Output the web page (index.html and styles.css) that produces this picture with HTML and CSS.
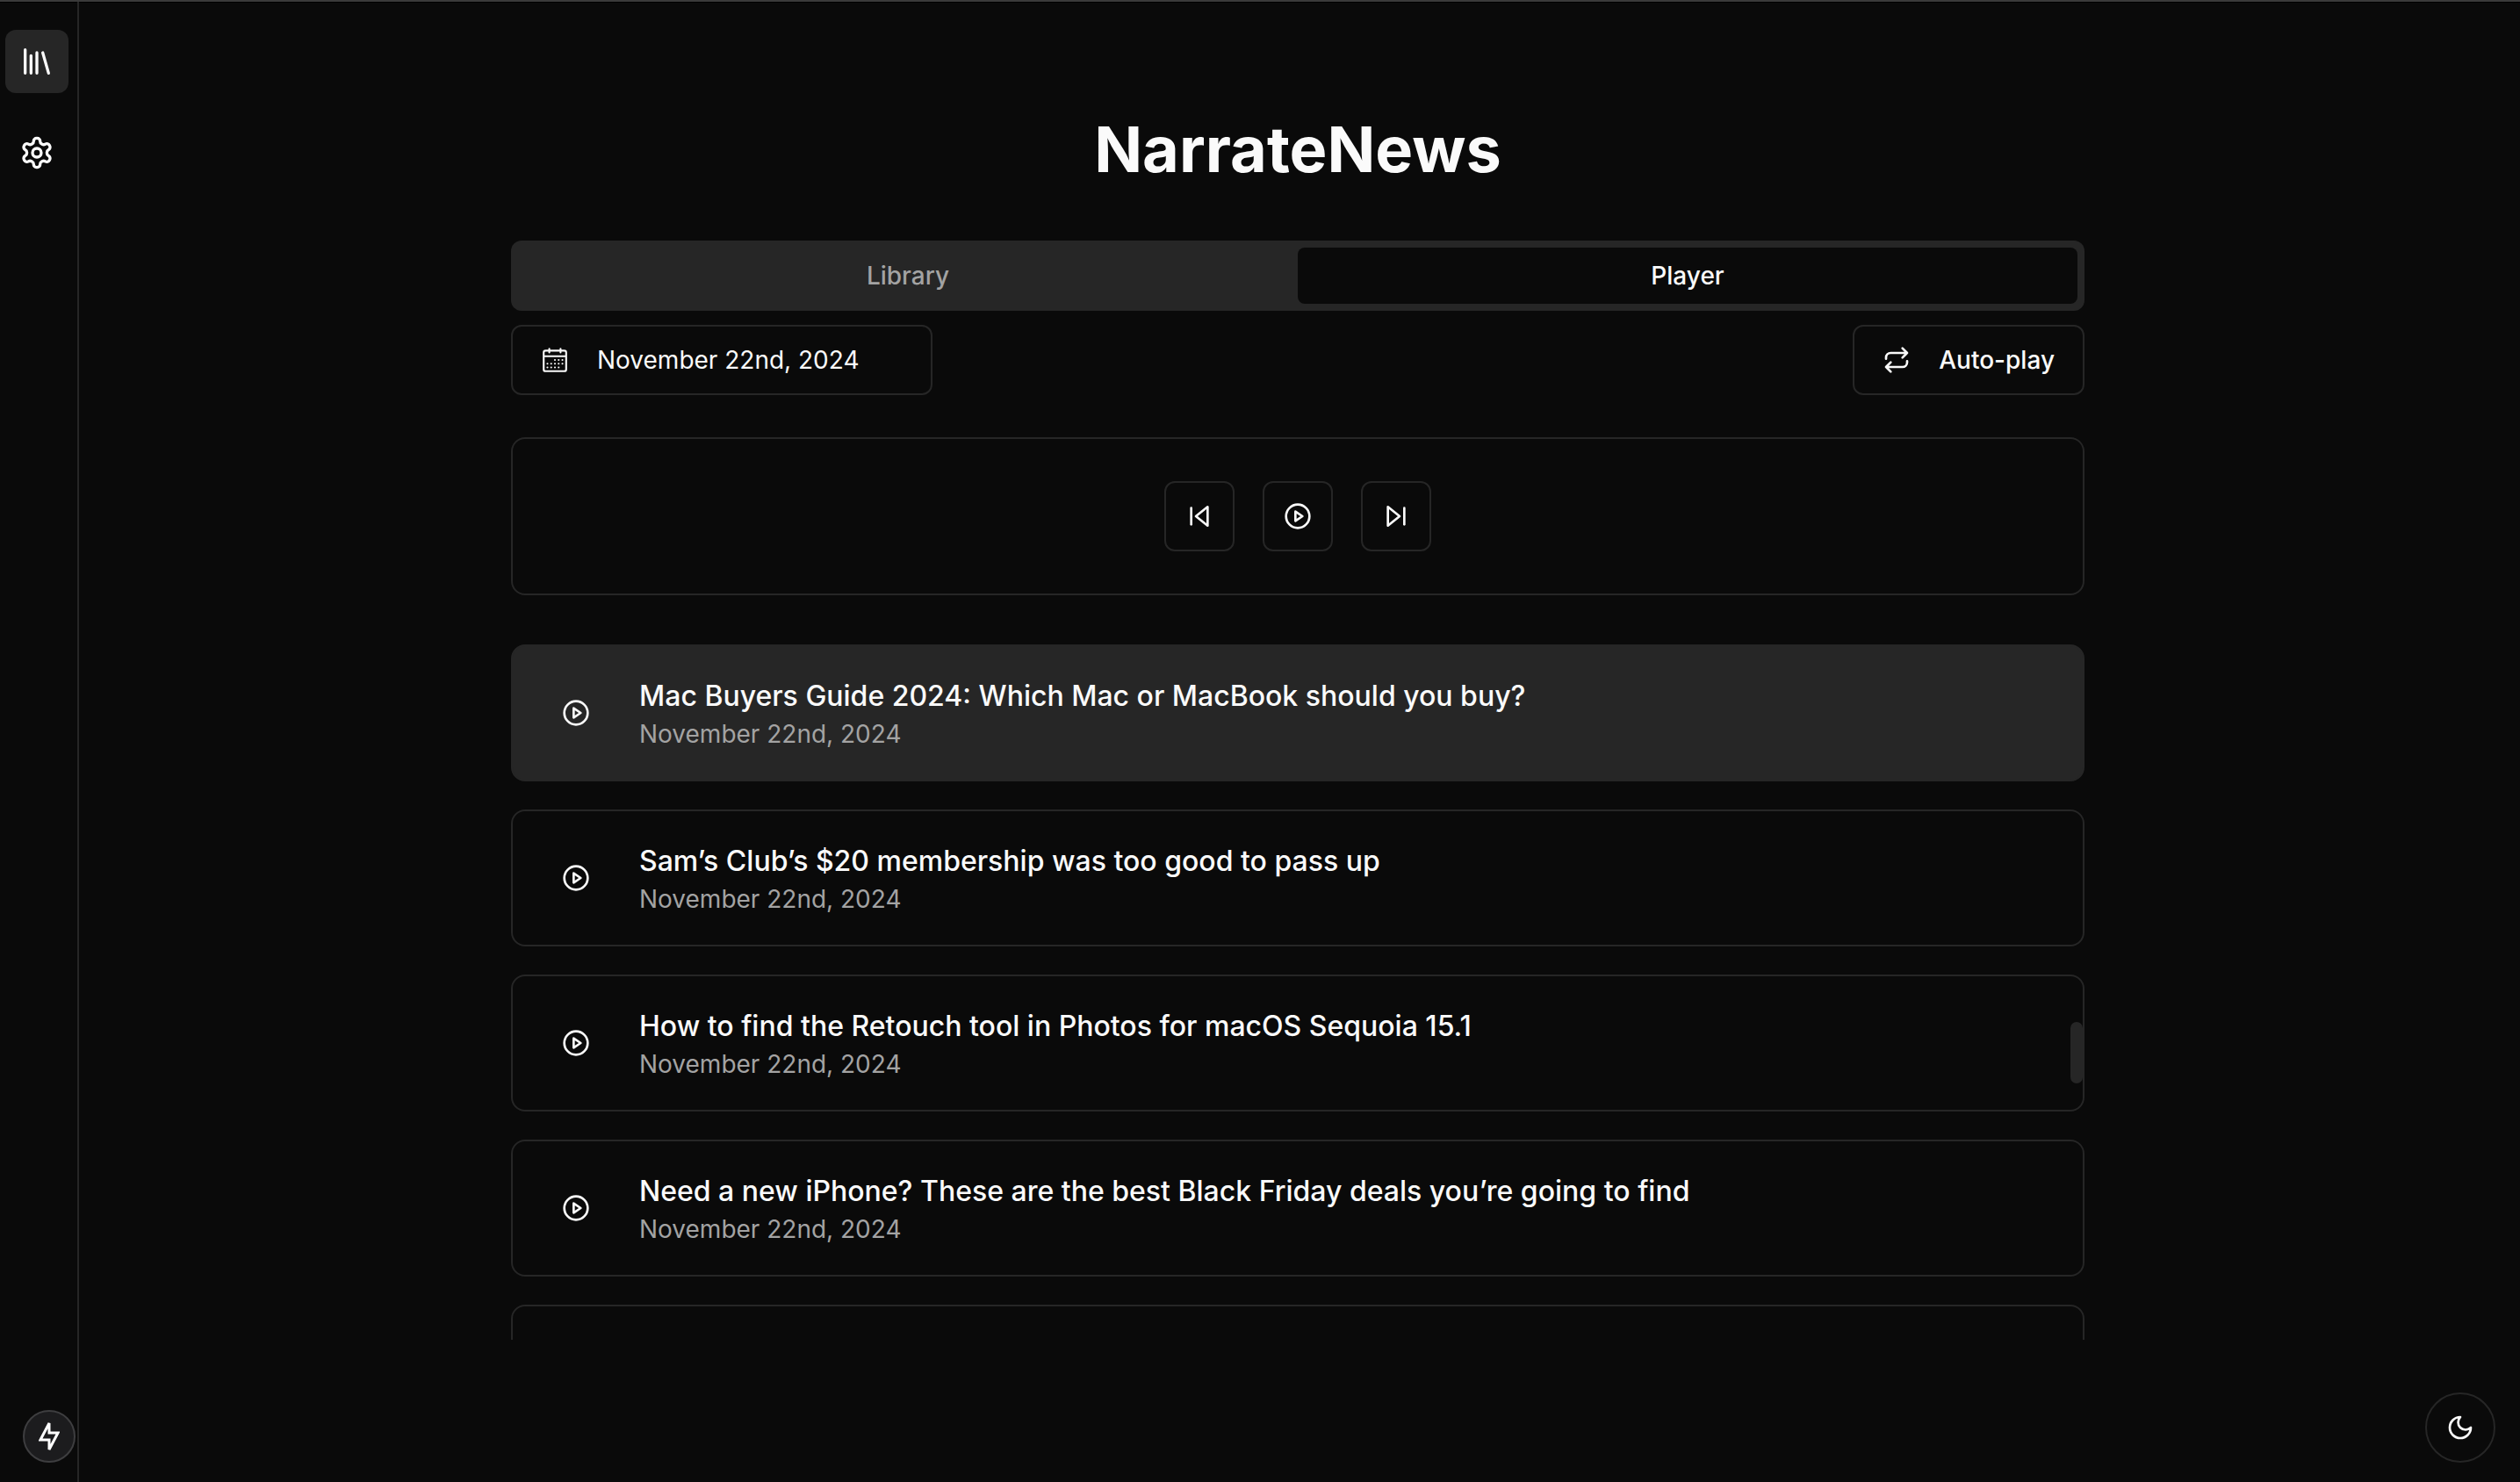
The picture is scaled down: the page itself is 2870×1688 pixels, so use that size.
FILE: index.html
```html
<!DOCTYPE html>
<html lang="en">
<head>
<meta charset="utf-8">
<meta name="viewport" content="width=device-width, initial-scale=1">
<title>NarrateNews</title>
<link rel="stylesheet" href="styles.css">
</head>
<body>
<svg class="sprite" aria-hidden="true">
  <symbol id="play" viewBox="0 0 24 24"><circle cx="12" cy="12" r="10"/><polygon points="10 8 16 12 10 16 10 8"/></symbol>
</svg>
<div class="app">
  <nav class="sidebar" aria-label="Main">
    <a class="nav-link active" href="#library" aria-label="Library">
      <svg class="icon icon-lg" viewBox="0 0 24 24"><path d="m16 6 4 14M12 6v14M8 8v12M4 4v16"/></svg>
    </a>
    <a class="nav-link" href="#settings" aria-label="Settings">
      <svg class="icon icon-lg" viewBox="0 0 24 24"><path d="M12.22 2h-.44a2 2 0 0 0-2 2v.18a2 2 0 0 1-1 1.73l-.43.25a2 2 0 0 1-2 0l-.15-.08a2 2 0 0 0-2.73.73l-.22.38a2 2 0 0 0 .73 2.73l.15.1a2 2 0 0 1 1 1.72v.51a2 2 0 0 1-1 1.74l-.15.09a2 2 0 0 0-.73 2.73l.22.38a2 2 0 0 0 2.73.73l.15-.08a2 2 0 0 1 2 0l.43.25a2 2 0 0 1 1 1.73V20a2 2 0 0 0 2 2h.44a2 2 0 0 0 2-2v-.18a2 2 0 0 1 1-1.73l.43-.25a2 2 0 0 1 2 0l.15.08a2 2 0 0 0 2.73-.73l.22-.39a2 2 0 0 0-.73-2.73l-.15-.08a2 2 0 0 1-1-1.74v-.5a2 2 0 0 1 1-1.74l.15-.09a2 2 0 0 0 .73-2.73l-.22-.38a2 2 0 0 0-2.73-.73l-.15.08a2 2 0 0 1-2 0l-.43-.25a2 2 0 0 1-1-1.73V4a2 2 0 0 0-2-2z"/><circle cx="12" cy="12" r="3"/></svg>
    </a>
  </nav>
  <main class="main">
    <h1 class="title">NarrateNews</h1>
    <div class="tabs" role="tablist">
      <button class="tab" type="button" role="tab" aria-selected="false">Library</button>
      <button class="tab selected" type="button" role="tab" aria-selected="true">Player</button>
    </div>
    <div class="toolbar">
      <button class="btn date-btn" type="button">
        <svg class="icon calendar" viewBox="0 0 15 15"><path d="M4.5 1a.5.5 0 0 1 .5.5V2h5v-.5a.5.5 0 0 1 1 0V2h1.500A1.500 1.500 0 0 1 14 3.500v9a1.500 1.500 0 0 1-1.500 1.500h-10A1.500 1.500 0 0 1 1 12.500v-9A1.500 1.500 0 0 1 2.500 2H4v-.5a.5.5 0 0 1 .5-.5ZM10 3v.5a.5.5 0 0 0 1 0V3h1.500a.5.5 0 0 1 .5.5V5H2V3.500a.5.5 0 0 1 .5-.5H4v.5a.5.5 0 0 0 1 0V3ZM2 6v6.500a.5.5 0 0 0 .5.5h10a.5.5 0 0 0 .5-.5V6Z" fill-rule="evenodd"/><g><circle cx="7.500" cy="7.500" r=".5"/><circle cx="9.500" cy="7.500" r=".5"/><circle cx="11.500" cy="7.500" r=".5"/><circle cx="3.500" cy="9.500" r=".5"/><circle cx="5.500" cy="9.500" r=".5"/><circle cx="7.500" cy="9.500" r=".5"/><circle cx="9.500" cy="9.500" r=".5"/><circle cx="11.500" cy="9.500" r=".5"/><circle cx="3.500" cy="11.500" r=".5"/><circle cx="5.500" cy="11.500" r=".5"/><circle cx="7.500" cy="11.500" r=".5"/><circle cx="9.500" cy="11.500" r=".5"/></g></svg>
        November 22nd, 2024
      </button>
      <button class="btn autoplay" type="button">
        <svg class="icon" viewBox="0 0 24 24"><path d="m17 2 4 4-4 4M3 11v-1a4 4 0 0 1 4-4h14M7 22l-4-4 4-4M21 13v1a4 4 0 0 1-4 4H3"/></svg>
        Auto-play
      </button>
    </div>
    <section class="player" aria-label="Player controls">
      <button class="btn square" type="button" aria-label="Previous"><svg class="icon" viewBox="0 0 24 24"><polygon points="19 20 9 12 19 4 19 20"/><path d="M5 19V5"/></svg></button>
      <button class="btn square" type="button" aria-label="Play"><svg class="icon"><use href="#play"/></svg></button>
      <button class="btn square" type="button" aria-label="Next"><svg class="icon" viewBox="0 0 24 24"><polygon points="5 4 15 12 5 20 5 4"/><path d="M19 5v14"/></svg></button>
    </section>
    <div class="feed">
      <ul class="articles">
        <li class="card current">
          <button class="play" type="button" aria-label="Play article"><svg class="icon"><use href="#play"/></svg></button>
          <div><h2 class="headline">Mac Buyers Guide 2024: Which Mac or MacBook should you buy?</h2><p class="date">November 22nd, 2024</p></div>
        </li>
        <li class="card">
          <button class="play" type="button" aria-label="Play article"><svg class="icon"><use href="#play"/></svg></button>
          <div><h2 class="headline">Sam’s Club’s $20 membership was too good to pass up</h2><p class="date">November 22nd, 2024</p></div>
        </li>
        <li class="card">
          <button class="play" type="button" aria-label="Play article"><svg class="icon"><use href="#play"/></svg></button>
          <div><h2 class="headline">How to find the Retouch tool in Photos for macOS Sequoia 15.1</h2><p class="date">November 22nd, 2024</p></div>
        </li>
        <li class="card">
          <button class="play" type="button" aria-label="Play article"><svg class="icon"><use href="#play"/></svg></button>
          <div><h2 class="headline">Need a new iPhone? These are the best Black Friday deals you’re going to find</h2><p class="date">November 22nd, 2024</p></div>
        </li>
        <li class="card"></li>
      </ul>
      <div class="scroll-thumb"></div>
    </div>
  </main>
</div>
<button class="fab dev" type="button" aria-label="Developer tools">
  <svg class="bolt" viewBox="0 0 24 32"><path d="M12 1V12H22L12 31V20H2Z"/></svg>
</button>
<button class="fab theme" type="button" aria-label="Toggle theme">
  <svg class="icon" viewBox="0 0 24 24"><path d="M12 3a6 6 0 0 0 9 9 9 9 0 1 1-9-9Z"/></svg>
</button>
</body>
</html>
```
FILE: styles.css
```css
:root {
  --bg: #0a0a0a;
  --fg: #fafafa;
  --muted: #262626;
  --muted-fg: #a3a3a3;
}

* { box-sizing: border-box; }

body {
  margin: 0;
  background: var(--bg);
  color: var(--fg);
  font-family: Inter, sans-serif;
  font-size: 28px;
  line-height: 40px;
}

h1, h2, p, ul { margin: 0; padding: 0; }
ul { list-style: none; }

button {
  padding: 0;
  border: 0;
  background: none;
  color: inherit;
  font: inherit;
}

.sprite { position: absolute; width: 0; height: 0; }

.icon {
  flex: none;
  width: 32px;
  height: 32px;
  fill: none;
  stroke: currentColor;
  stroke-width: 2;
  stroke-linecap: round;
  stroke-linejoin: round;
}
.icon-lg { width: 40px; height: 40px; }
.calendar { fill: currentColor; stroke: none; }

.app {
  display: flex;
  min-height: 100vh;
  padding-right: 4px;
  border-top: 2px solid #3a3a3a;
  box-shadow: inset 0 1px #000;
}

.sidebar {
  flex: none;
  display: flex;
  flex-direction: column;
  align-items: center;
  gap: 32px;
  width: 90px;
  padding: 32px 5px 0 0;
  border-right: 2px solid var(--muted);
}

.nav-link {
  display: flex;
  align-items: center;
  justify-content: center;
  width: 72px;
  height: 72px;
  border-radius: 12px;
  color: inherit;
}
.nav-link.active { background: var(--muted); }

.main {
  flex: 1;
  max-width: 1792px;
  margin: 0 auto;
  padding-top: 128px;
}

.title {
  margin-bottom: 64px;
  font-size: 72px;
  line-height: 80px;
  font-weight: 700;
  text-align: center;
}

.tabs {
  display: grid;
  grid-template-columns: 1fr 1fr;
  height: 80px;
  padding: 8px;
  border-radius: 12px;
  background: var(--muted);
}
.tab {
  border-radius: 8px;
  color: var(--muted-fg);
  font-weight: 500;
}
.tab.selected { background: var(--bg); color: var(--fg); }

.toolbar {
  display: flex;
  justify-content: space-between;
  margin: 16px 0 48px;
}

.btn {
  display: flex;
  align-items: center;
  height: 80px;
  padding: 0 32px;
  border: 2px solid var(--muted);
  border-radius: 12px;
}
.date-btn { gap: 32px; width: 480px; }
.autoplay { gap: 32px; font-weight: 500; }
.square { justify-content: center; width: 80px; padding: 0; }

.player {
  display: flex;
  justify-content: center;
  gap: 32px;
  padding: 48px;
  border: 2px solid var(--muted);
  border-radius: 16px;
}

.feed {
  position: relative;
  height: 792px;
  margin-top: 56px;
  overflow: hidden;
}
.articles { display: grid; gap: 32px; }
.card {
  display: flex;
  align-items: center;
  gap: 56px;
  min-height: 156px;
  padding: 0 56px;
  border: 2px solid var(--muted);
  border-radius: 16px;
}
.card.current { background: var(--muted); }
.play { display: flex; }
.headline { font-size: 32px; line-height: 48px; font-weight: 500; }
.date { line-height: 38px; color: var(--muted-fg); }

.scroll-thumb {
  position: absolute;
  top: 430px;
  right: 2px;
  width: 14px;
  height: 70px;
  border-radius: 7px;
  background: var(--muted);
}

.fab {
  position: fixed;
  display: flex;
  align-items: center;
  justify-content: center;
  border-radius: 50%;
}
.dev {
  left: 26px;
  bottom: 22px;
  width: 60px;
  height: 60px;
  border: 2px solid #3e3e40;
  background: #1c1c1e;
}
.bolt {
  width: 24px;
  height: 32px;
  fill: none;
  stroke: #fff;
  stroke-width: 3;
}
.theme {
  right: 28px;
  bottom: 22px;
  width: 80px;
  height: 80px;
  border: 2px solid var(--muted);
  background: var(--bg);
}
```
